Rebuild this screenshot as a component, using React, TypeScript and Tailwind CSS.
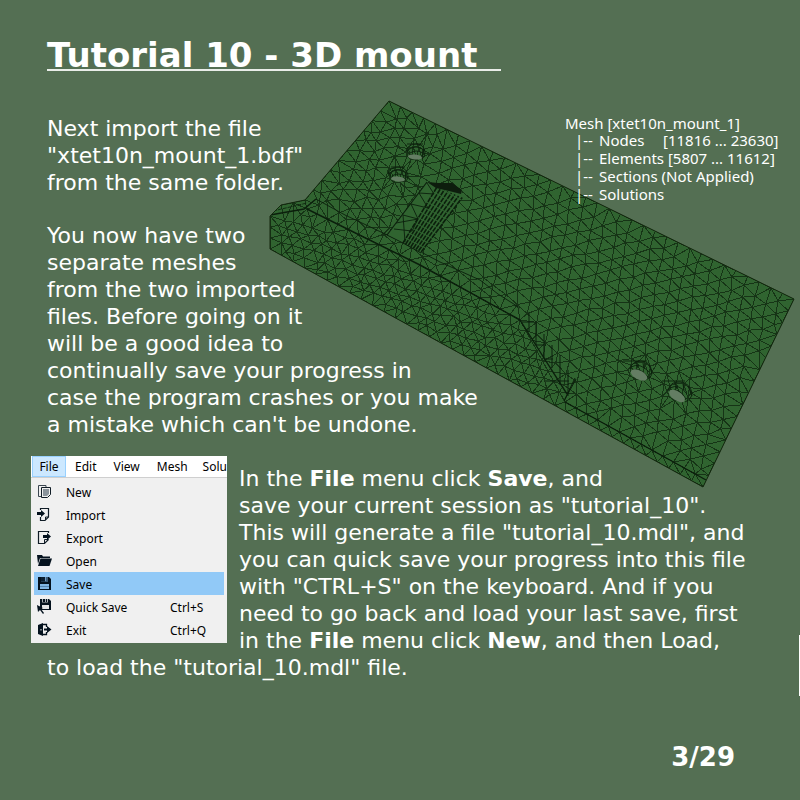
import React from "react";

type Point = [number, number];

const SILHOUETTE: Point[] = [
  [389, 101], [794, 299], [703, 487], [270, 249], [270, 216], [281, 205], [305, 200],
];
const FRONT: Point[] = [
  [270, 216], [307, 209], [420, 265], [520, 320], [565, 402], [706, 480], [703, 487], [270, 249],
];
const HOLES: [number, number, number][] = [[415, 153, 9], [398, 176, 9], [640, 371, 12], [679, 392, 12]];

function makeRandom(seed: number) {
  let s = seed;
  return () => {
    s = (s * 16807) % 2147483647;
    return s / 2147483647;
  };
}

function inside(p: Point, poly: Point[]) {
  let hit = false;
  for (let i = 0, j = poly.length - 1; i < poly.length; j = i++) {
    const [xi, yi] = poly[i];
    const [xj, yj] = poly[j];
    if (yi > p[1] !== yj > p[1] && p[0] < ((xj - xi) * (p[1] - yi)) / (yj - yi) + xi) hit = !hit;
  }
  return hit;
}

function edgeDistance(p: Point, poly: Point[]) {
  let best = Infinity;
  for (let i = 0; i < poly.length; i++) {
    const a = poly[i];
    const b = poly[(i + 1) % poly.length];
    const dx = b[0] - a[0];
    const dy = b[1] - a[1];
    const t = Math.max(0, Math.min(1, ((p[0] - a[0]) * dx + (p[1] - a[1]) * dy) / (dx * dx + dy * dy)));
    best = Math.min(best, Math.hypot(p[0] - a[0] - t * dx, p[1] - a[1] - t * dy));
  }
  return best;
}

function lattice(origin: Point, a: Point, b: Point, jitter: number, keep: (p: Point) => boolean, rnd: () => number) {
  const out: Point[] = [];
  for (let i = -80; i <= 80; i++) {
    for (let j = -80; j <= 80; j++) {
      const p: Point = [
        origin[0] + i * a[0] + j * b[0] + (rnd() - 0.5) * jitter,
        origin[1] + i * a[1] + j * b[1] + (rnd() - 0.5) * jitter,
      ];
      if (keep(p)) out.push(p);
    }
  }
  return out;
}

function along(poly: Point[], step: number, closed: boolean) {
  const out: Point[] = [];
  const last = closed ? poly.length : poly.length - 1;
  for (let i = 0; i < last; i++) {
    const a = poly[i];
    const b = poly[(i + 1) % poly.length];
    const n = Math.max(1, Math.round(Math.hypot(b[0] - a[0], b[1] - a[1]) / step));
    for (let k = 0; k < n; k++) {
      out.push([a[0] + ((b[0] - a[0]) * k) / n + 0.01 * (k % 3), a[1] + ((b[1] - a[1]) * k) / n]);
    }
  }
  return out;
}

type Tri = { v: [number, number, number]; x: number; y: number; r: number };

// Bowyer-Watson triangulation, returned as one path of unique edges
function triangulate(input: Point[]) {
  const pts = [...input].sort((p, q) => p[0] - q[0]);
  const n = pts.length;
  pts.push([-4000, -4000], [6000, -4000], [500, 8000]);
  const circle = (a: number, b: number, c: number): Tri => {
    const [ax, ay] = pts[a];
    const bx = pts[b][0] - ax;
    const by = pts[b][1] - ay;
    const cx = pts[c][0] - ax;
    const cy = pts[c][1] - ay;
    const d = 2 * (bx * cy - by * cx) || 1e-9;
    const ux = (cy * (bx * bx + by * by) - by * (cx * cx + cy * cy)) / d;
    const uy = (bx * (cx * cx + cy * cy) - cx * (bx * bx + by * by)) / d;
    return { v: [a, b, c], x: ax + ux, y: ay + uy, r: ux * ux + uy * uy };
  };
  let open: Tri[] = [circle(n, n + 1, n + 2)];
  const done: Tri[] = [];
  for (let i = 0; i < n; i++) {
    const [x, y] = pts[i];
    const border = new Map<string, [number, number] | null>();
    const next: Tri[] = [];
    for (const t of open) {
      const dx = x - t.x;
      if (dx > 0 && dx * dx > t.r) {
        done.push(t);
      } else if (dx * dx + (y - t.y) ** 2 < t.r) {
        for (const [p, q] of [[t.v[0], t.v[1]], [t.v[1], t.v[2]], [t.v[2], t.v[0]]]) {
          const key = p < q ? p + "_" + q : q + "_" + p;
          border.set(key, border.has(key) ? null : [p, q]);
        }
      } else {
        next.push(t);
      }
    }
    border.forEach((e) => {
      if (e) next.push(circle(e[0], e[1], i));
    });
    open = next;
  }
  const edges = new Set<string>();
  for (const t of done.concat(open)) {
    if (t.v.some((k) => k >= n)) continue;
    for (const [p, q] of [[t.v[0], t.v[1]], [t.v[1], t.v[2]], [t.v[2], t.v[0]]]) {
      const [a, b] = p < q ? [pts[p], pts[q]] : [pts[q], pts[p]];
      edges.add(`M${a[0].toFixed(1)} ${a[1].toFixed(1)}L${b[0].toFixed(1)} ${b[1].toFixed(1)}`);
    }
  }
  return Array.from(edges).join("");
}

function buildMesh() {
  const rnd = makeRandom(4217);
  const clearOfHoles = (p: Point) => HOLES.every(([x, y, r]) => Math.hypot(p[0] - x, p[1] - y) > r + 3);
  const onTop = (p: Point) =>
    inside(p, SILHOUETTE) && !inside(p, FRONT) && edgeDistance(p, SILHOUETTE) > 6 && edgeDistance(p, FRONT) > 6 && clearOfHoles(p);
  const fine = (p: Point) => p[0] + p[1] * 0.4 < 500;
  const pts = [
    ...along(SILHOUETTE, 13, true),
    ...along(FRONT.slice(1, 6), 12, false),
    ...lattice([389, 110], [12, -1], [-4, 10], 4.5, (p) => onTop(p) && fine(p), rnd),
    ...lattice([600, 250], [13, -3], [-2, 12], 3, (p) => onTop(p) && !fine(p), rnd),
    ...lattice([300, 240], [10, 3], [3, 9], 4, (p) => inside(p, FRONT) && edgeDistance(p, FRONT) > 4, rnd),
  ];
  for (const [x, y, r] of HOLES) {
    for (let k = 0; k < 10; k++) {
      const t = (k * Math.PI) / 5 + 0.1;
      pts.push([x + Math.cos(t) * r, y + Math.sin(t) * r * 0.75]);
    }
  }
  return triangulate(pts);
}

const MESH_PATH = buildMesh();

const HATCH = Array.from({ length: 8 }, (_, i) => {
  return `M${403 + i * 2.6} ${243 + i * 1.3}L${437 + i * 3.6} ${187 + i * 1.5}`;
}).join("");

function MountModel() {
  return (
    <svg viewBox="0 0 800 800" className="pointer-events-none absolute top-0 left-0 w-[800px]" role="img" aria-label="Meshed 3D mount">
      <defs>
        <clipPath id="body">
          <polygon points={SILHOUETTE.map((p) => p.join(",")).join(" ")} />
        </clipPath>
      </defs>
      <polygon points={SILHOUETTE.map((p) => p.join(",")).join(" ")} fill="#306430" />
      <g clipPath="url(#body)" fill="none" stroke="#0b1f0c">
        <path d={MESH_PATH} strokeWidth="1" opacity="0.7" shapeRendering="crispEdges" />
        <path d="M307 209L420 265L520 320" strokeWidth="1.5" />
        <path d="M520 320L544 358L567 394M565 402L706 480" strokeWidth="1.4" />
        <path d="M316 199L345 215L400 241L440 262L480 280L498 294L520 308" strokeWidth="0.9" />
        <path d="M270 215L304 209L316 199" strokeWidth="1.4" />
        <path d="M273 211L307 203M281 205L305 200" strokeWidth="0.8" strokeDasharray="4 1" />
        <path d="M522 322h12M529 312v20M536 321v24h10M544 334v25h9M552 345v23M560 355v30M568 370v26M575 378l-11 23M545 381h24M564 401l12-22" strokeWidth="1" />
      </g>
      <polygon points={SILHOUETTE.map((p) => p.join(",")).join(" ")} fill="none" stroke="#14290f" strokeWidth="1" />
      <path d="M387 235L427 182L445 184L462 190L461 198L421 253L403 243Z" fill="#306430" />
      <g fill="none" stroke="#0b1f0c">
        <path d="M387 235L427 182" strokeWidth="1.2" />
        <path d="M387 235L403 243M394 229L412 231M403 215L405 242M411 204L418 219M396 223L418 219M411 204L428 208M419 193L434 194M419 193L428 208M403 215L418 219M427 183L434 194M412 231L418 219" strokeWidth="0.9" />
        <path d={HATCH} strokeWidth="1.6" strokeDasharray="5 1" />
        <path d="M403 243L421 253" strokeWidth="1" />
      </g>
      <path d="M427 182L438 183L452 183L462 190L461 194L449 191L436 188Z" fill="#0d1d0d" />
      <g fill="none" stroke="#0b1f0c" strokeWidth="0.9">
        <path d="M406 151q2-7 10-7t9 8q0 5-3 7M407 144h16M408 150q8-6 16 0M410 153q6-4 13 0M407 150l3 6M424 149l-2 8" />
        <path d="M388 174q2-7 10-7t10 8q0 5-3 7M391 167h14M390 173q8-6 16 0M392 176q6-4 13 0M389 172l3 7M406 171l-1 9" />
        <path d="M630 369q2-8 11-8t11 11q0 6-7 8M623 361h24M631 367q9-5 18 5M632 370q8-3 16 7M649 365l3 9M636 362l2 6M643 363l1 6" />
        <path d="M668 391q2-10 12-9t12 11q0 6-7 9M662 381h23M670 388q9-5 17 6M671 391q8-4 15 8M688 386l4 10M675 383l2 6M683 384l1 6" />
      </g>
      <g fill="#647d63">
        <ellipse cx="415" cy="157" rx="7" ry="2.5" transform="rotate(6 415 157)" />
        <ellipse cx="398" cy="179" rx="7" ry="2.6" transform="rotate(6 398 179)" />
        <ellipse cx="639" cy="375" rx="9" ry="4.5" transform="rotate(27 639 375)" />
        <ellipse cx="677" cy="396" rx="9" ry="4.5" transform="rotate(33 677 396)" />
      </g>
    </svg>
  );
}

const ICONS: Record<string, React.ReactNode> = {
  New: (
    <>
      <path d="M4 12.500H1.500v-11H9V3" fill="none" stroke="#3b4650" />
      <path d="M4.500 3.500h9v7l-3 3h-6z" fill="#f0f0f0" stroke="#101c26" />
      <path d="M6 5h6v5l-2 2H6z" fill="#8a939b" />
    </>
  ),
  Import: (
    <>
      <path d="M3.500 3V1.500h8v8.500l-3.500 3.500h-4.500V10" fill="none" stroke="#101c26" strokeWidth="1.200" />
      <path d="M8.500 13v-3h3" fill="none" stroke="#101c26" />
      <path d="M0 5h4V3l4 3.500L4 10V8H0z" fill="#04121e" />
    </>
  ),
  Export: (
    <>
      <path d="M11.500 3V1.500h-10v12h6l4-4" fill="none" stroke="#101c26" strokeWidth="1.200" />
      <path d="M7.500 13.500v-4h4" fill="none" stroke="#101c26" />
      <path d="M6 5h4V3l4 3.500L10 10V8H6z" fill="#04121e" />
    </>
  ),
  Open: (
    <>
      <path d="M0 2h5l1 1.500h7V5H3L1 11z" fill="#04121e" />
      <path d="M3.500 5.500H15L12.500 13H1z" fill="#04121e" />
    </>
  ),
  Save: (
    <>
      <path d="M1 1h11l2 2v11H1z" fill="#04121e" />
      <path d="M4 1h7v4.500H4z" fill="#6f9cc4" />
      <path d="M4 1h4v4.500H4zM9.500 1h1v4h-1z" fill="#0b1f30" />
      <path d="M3 8h9v5H3z" fill="#82b7e3" />
      <path d="M3 10.500h9" stroke="#5686b0" />
    </>
  ),
  "Quick Save": (
    <>
      <path d="M3 0h9l2 2v9H3z" fill="#04121e" />
      <path d="M5 0h6v3.500H5z" fill="#aab0b5" />
      <path d="M6 0h2v3H6zM9 0h1v3H9z" fill="#04121e" />
      <path d="M5 6h7v4H5z" fill="#e2e4e6" />
      <path d="M0 6l6 3-2 1 3 4-1 1-3-4-2 2z" fill="#04121e" />
    </>
  ),
  Exit: (
    <>
      <path d="M1 3l5-2v13l-5-2z" fill="#04121e" />
      <path d="M6 2.500h3.500V5M6 12.500h3.500V10" fill="none" stroke="#04121e" strokeWidth="1.300" />
      <path d="M7 6.500h3V4l4.500 3.500L10 11V8.500H7z" fill="#04121e" />
      <path d="M4 7v1.500" stroke="#f0f0f0" />
    </>
  ),
};

const MENU_ITEMS: { label: string; shortcut?: string }[] = [
  { label: "New" },
  { label: "Import" },
  { label: "Export" },
  { label: "Open" },
  { label: "Save" },
  { label: "Quick Save", shortcut: "Ctrl+S" },
  { label: "Exit", shortcut: "Ctrl+Q" },
];

function FileMenu() {
  return (
    <div className="float-left mr-3 -ml-4 w-[196px] overflow-hidden bg-[#f0f0f0] font-['Noto_Sans',sans-serif] text-[12px] leading-5 text-black">
      <div className="flex h-[22px] gap-px border-b border-[#cfcfcf] bg-white pl-px">
        <button className="w-[34px] shrink-0 border border-[#99d1ff] bg-[#cce8ff]">File</button>
        {["Edit", "View", "Mesh"].map((name) => (
          <button key={name} className="shrink-0 px-2 pt-px">
            {name}
          </button>
        ))}
        <button className="shrink-0 pt-px pl-1.5">Solu</button>
      </div>
      <div className="px-[3px] py-[2px]">
        {MENU_ITEMS.map(({ label, shortcut }) => (
          <button
            key={label}
            className={
              label === "Save"
                ? "flex h-[23px] w-full items-center bg-[#91c9f7] pl-[3px] text-left"
                : "flex h-[23px] w-full items-center pl-[3px] text-left"
            }
          >
            <svg viewBox="0 0 15 15" className="mr-[14px] size-[15px] shrink-0">
              {ICONS[label]}
            </svg>
            <span className="w-[104px] pt-0.5">{label}</span>
            <span className="pt-0.5">{shortcut}</span>
          </button>
        ))}
      </div>
    </div>
  );
}

function MeshTree() {
  return (
    <div className="absolute top-[114px] left-[565px] font-['Noto_Sans',sans-serif] text-[15px] leading-[18px] whitespace-pre">
      <p className="h-[17px]">Mesh [xtet10n_mount_1]</p>
      <ul className="pl-2.5">
        {["Nodes", "Elements [5807 ... 11612]", "Sections (Not Applied)", "Solutions"].map((text) => (
          <li key={text} className="flex">
            <span className="w-6">|--</span>
            {text === "Nodes" ? (
              <>
                <span className="w-16">Nodes</span>
                <span>[11816 ... 23630]</span>
              </>
            ) : (
              <span>{text}</span>
            )}
          </li>
        ))}
      </ul>
    </div>
  );
}

export default function App() {
  return (
    <div className="relative min-h-screen overflow-hidden bg-[#546f53] font-['DejaVu_Sans',sans-serif] text-[22px] leading-[27px] text-white">
      <MountModel />
      <MeshTree />
      <main className="relative px-[47px] pt-[37px]">
        <h1 className="h-[34px] w-fit border-b-2 border-[#e9ede9] pr-6 text-[34px] leading-9 font-bold">Tutorial 10 - 3D mount</h1>
        <p className="mt-11">
          Next import the file
          <br />
          "xtet10n_mount_1.bdf"
          <br />
          from the same folder.
        </p>
        <p className="mt-[26px]">
          You now have two
          <br />
          separate meshes
          <br />
          from the two imported
          <br />
          files. Before going on it
          <br />
          will be a good idea to
          <br />
          continually save your progress in
          <br />
          case the program crashes or you make
          <br />
          a mistake which can't be undone.
        </p>
        <section className="mt-[18px]">
          <FileMenu />
          <p className="pt-[9px]">
            In the <b>File</b> menu click <b>Save</b>, and
            <br />
            save your current session as "tutorial_10".
            <br />
            This will generate a file "tutorial_10.mdl", and
            <br />
            you can quick save your progress into this file
            <br />
            with "CTRL+S" on the keyboard. And if you
            <br />
            need to go back and load your last save, first
            <br />
            in the <b>File</b> menu click <b>New</b>, and then Load,
            <br />
            to load the "tutorial_10.mdl" file.
          </p>
        </section>
        <footer className="mt-[60px] pr-[18px] text-right text-[26px] leading-8 font-bold">3/29</footer>
      </main>
      <div className="absolute top-[635px] right-0 h-[61px] w-px bg-white" />
    </div>
  );
}
